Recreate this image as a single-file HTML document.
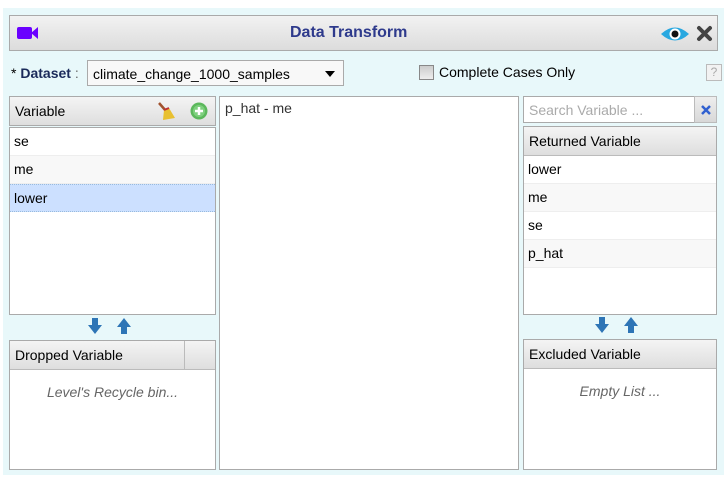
<!DOCTYPE html>
<html><head><style>
*{box-sizing:border-box;margin:0;padding:0}
body{width:727px;height:478px;background:#fff;font-family:"Liberation Sans",Arial,sans-serif;font-size:14px;color:#000;position:relative;overflow:hidden}
.a{position:absolute}
.bg{left:3px;top:8px;width:721px;height:467px;background:#e8f8fa}
.hdr{left:9px;top:15px;width:709px;height:36px;border:1px solid #aaa;background:linear-gradient(#f2f2f2,#dcdcdc)}
.box{border:1px solid #aaa;background:#fff}
.th{background:linear-gradient(#f4f4f4,#dedede);border-bottom:1px solid #bbb;height:29px;line-height:28px;padding-left:5px}
.row{height:28px;line-height:27px;padding-left:4px;border-bottom:1px solid #eee}
</style></head><body>
<div class="a bg"></div>
<div class="a hdr">
 <svg class="a" style="left:7px;top:10px" width="22" height="14"><rect x="0" y="1" width="15" height="12" rx="2" fill="#6a00ff"/><path d="M14 7 L21 1 V13 Z" fill="#6a00ff"/></svg>
 <div class="a" style="left:280px;top:8px;font-weight:bold;font-size:16px;color:#2e3a8c">Data Transform</div>
 <svg class="a" style="left:650px;top:9px" width="30" height="18"><path d="M1 9 Q15 -4 29 9 Q15 22 1 9Z" fill="#29a8e0"/><circle cx="15" cy="9" r="5.5" fill="#fff"/><circle cx="15" cy="9" r="3.5" fill="#111"/></svg>
 <svg class="a" style="left:686px;top:9px" width="17" height="17"><path d="M3 3 L14 14 M14 3 L3 14" stroke="#444" stroke-width="4" stroke-linecap="round"/></svg>
</div>
<div class="a" style="left:11px;top:65px;font-size:14px"><span style="color:#000">*</span> <b style="color:#1a2a5a">Dataset</b> <span style="color:#666">:</span></div>
<div class="a" style="left:87px;top:60px;width:257px;height:26px;border:1px solid #aaa;background:#f8f8f8;padding:5px 0 0 5px">climate_change_1000_samples<span class="a" style="right:8px;top:10px;border:5px solid transparent;border-top:6px solid #000;border-bottom:0"></span></div>
<div class="a" style="left:419px;top:65px;width:15px;height:15px;border:1px solid #888;background:linear-gradient(#ccc,#eee)"></div>
<div class="a" style="left:439px;top:64px">Complete Cases Only</div>
<div class="a" style="left:706px;top:64px;width:16px;height:17px;border:1px solid #bbb;background:#f2f2f2;color:#aaa;font-size:12px;text-align:center;line-height:15px">?</div>

<div class="a box" style="left:9px;top:96px;width:207px;height:30px;border-color:#aaa"><div class="th" style="border:0;height:28px">Variable</div>
 <svg class="a" style="left:146px;top:4px" width="20" height="20"><path d="M3 2 L10 10" stroke="#a0522d" stroke-width="2.5"/><path d="M8 9 L13 7 L19 17 L7 19 Z" fill="#e8c030"/><path d="M8 9 L13 7" stroke="#c03030" stroke-width="2"/></svg>
 <svg class="a" style="left:180px;top:5px" width="18" height="18"><circle cx="9" cy="9" r="8.5" fill="#5cb85c"/><circle cx="9" cy="9" r="6" fill="#7ed07e"/><path d="M9 5 V13 M5 9 H13" stroke="#fff" stroke-width="2.5"/></svg>
</div>
<div class="a box" style="left:9px;top:127px;width:207px;height:188px">
 <div class="row">se</div><div class="row" style="background:#f8f8f8">me</div><div class="row" style="background:#cce0ff;border-top:1px dotted #9bd;border-bottom:1px dotted #9bd">lower</div>
</div>
<svg class="a" style="left:86px;top:317px" width="50" height="18"><path d="M6 1 H12 V8 H16 L9 17 L2 8 H6Z" fill="#2e75b6"/><path d="M38 1 L45 10 H41 V17 H35 V10 H31Z" fill="#2e75b6"/></svg>
<div class="a box" style="left:9px;top:340px;width:207px;height:130px">
 <div class="th" style="position:relative">Dropped Variable<div class="a" style="left:174px;top:0;width:1px;height:28px;background:#bbb"></div></div>
 <div style="text-align:center;font-style:italic;color:#666;margin-top:14px">Level's Recycle bin...</div>
</div>

<div class="a box" style="left:219px;top:96px;width:300px;height:374px;padding:3px 5px;color:#333">p_hat - me</div>

<div class="a box" style="left:523px;top:96px;width:172px;height:27px;color:#aaa;padding:5px 5px">Search Variable ...</div>
<div class="a" style="left:694px;top:96px;width:23px;height:27px;border:1px solid #bbb;background:linear-gradient(#eee,#d8d8d8)"><svg class="a" style="left:5px;top:7px" width="12" height="12"><path d="M2 2 L10 10 M10 2 L2 10" stroke="#3060d0" stroke-width="2.5"/></svg></div>
<div class="a box" style="left:523px;top:126px;width:194px;height:189px">
 <div class="th">Returned Variable</div>
 <div class="row">lower</div><div class="row" style="background:#f8f8f8">me</div><div class="row">se</div><div class="row" style="background:#f8f8f8">p_hat</div>
</div>
<svg class="a" style="left:593px;top:316px" width="50" height="18"><path d="M6 1 H12 V8 H16 L9 17 L2 8 H6Z" fill="#2e75b6"/><path d="M38 1 L45 10 H41 V17 H35 V10 H31Z" fill="#2e75b6"/></svg>
<div class="a box" style="left:523px;top:339px;width:194px;height:131px">
 <div class="th">Excluded Variable</div>
 <div style="text-align:center;font-style:italic;color:#666;margin-top:14px">Empty List ...</div>
</div>
</body></html>
